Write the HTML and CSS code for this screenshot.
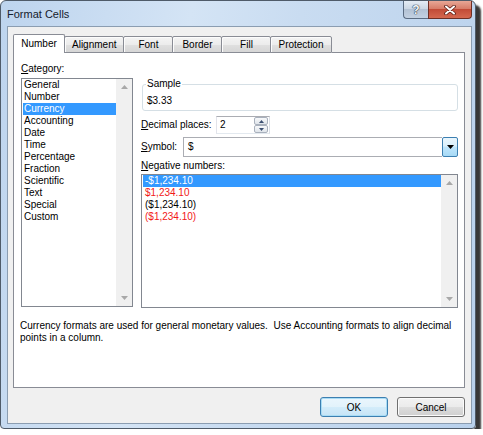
FILE: index.html
```html
<!DOCTYPE html>
<html>
<head>
<meta charset="utf-8">
<title>Format Cells</title>
<link rel="stylesheet" href="styles.css">
</head>
<body>
<div class="window">
  <div class="titlebar">
    <span class="title">Format Cells</span>
    <div class="caps">
      <div class="cap help">?</div>
      <div class="cap close">
        <svg width="12" height="10" viewBox="0 0 12 10"><path d="M2 1.5L10 8.5M10 1.5L2 8.5" stroke="#5a1c14" stroke-width="3.6" stroke-linecap="round"/><path d="M2 1.5L10 8.5M10 1.5L2 8.5" stroke="#ffffff" stroke-width="2" stroke-linecap="round"/></svg>
      </div>
    </div>
  </div>
  <div class="client">
    <div class="tabs">
      <div class="tab active">Number</div>
      <div class="tab">Alignment</div>
      <div class="tab">Font</div>
      <div class="tab">Border</div>
      <div class="tab">Fill</div>
      <div class="tab">Protection</div>
      <div class="tab-fill"></div>
    </div>
    <div class="panel">
      <div class="panel-main">
        <div class="col-left">
          <div class="lbl"><u>C</u>ategory:</div>
          <div class="listbox cat-list">
            <div class="items">
              <div class="item">General</div>
              <div class="item">Number</div>
              <div class="item sel">Currency</div>
              <div class="item">Accounting</div>
              <div class="item">Date</div>
              <div class="item">Time</div>
              <div class="item">Percentage</div>
              <div class="item">Fraction</div>
              <div class="item">Scientific</div>
              <div class="item">Text</div>
              <div class="item">Special</div>
              <div class="item">Custom</div>
            </div>
            <div class="vscroll">
              <span class="arr"><svg width="7" height="4" viewBox="0 0 7 4"><path d="M0 4L3.5 0L7 4Z" fill="#a8a8a8"/></svg></span>
              <span class="arr"><svg width="7" height="4" viewBox="0 0 7 4"><path d="M0 0L3.5 4L7 0Z" fill="#a8a8a8"/></svg></span>
            </div>
          </div>
        </div>
        <div class="col-right">
          <fieldset class="sample">
            <legend>Sample</legend>
            <div class="sample-val">$3.33</div>
          </fieldset>
          <div class="row dec">
            <span class="row-lbl dec-lbl"><u>D</u>ecimal places:</span>
            <div class="spin">
              <span class="spin-text">2</span>
              <div class="spin-btns">
                <span class="sb"><svg width="5" height="3" viewBox="0 0 5 3"><path d="M0 3L2.5 0L5 3Z" fill="#3a4e70"/></svg></span>
                <span class="sb"><svg width="5" height="3" viewBox="0 0 5 3"><path d="M0 0L2.5 3L5 0Z" fill="#3a4e70"/></svg></span>
              </div>
            </div>
          </div>
          <div class="row sym">
            <span class="row-lbl sym-lbl"><u>S</u>ymbol:</span>
            <div class="combo">
              <span class="combo-text">$</span>
              <span class="combo-btn"><svg width="7" height="4" viewBox="0 0 7 4"><path d="M0 0L3.5 4L7 0Z" fill="#000"/></svg></span>
            </div>
          </div>
          <div class="lbl neg-lbl"><u>N</u>egative numbers:</div>
          <div class="listbox neg-list">
            <div class="items">
              <div class="item sel">-$1,234.10</div>
              <div class="item red">$1,234.10</div>
              <div class="item">($1,234.10)</div>
              <div class="item red">($1,234.10)</div>
            </div>
            <div class="vscroll">
              <span class="arr"><svg width="7" height="4" viewBox="0 0 7 4"><path d="M0 4L3.5 0L7 4Z" fill="#a8a8a8"/></svg></span>
              <span class="arr"><svg width="7" height="4" viewBox="0 0 7 4"><path d="M0 0L3.5 4L7 0Z" fill="#a8a8a8"/></svg></span>
            </div>
          </div>
        </div>
      </div>
      <p class="desc">Currency formats are used for general monetary values.&nbsp; Use Accounting formats to align decimal<br>points in a column.</p>
    </div>
    <div class="buttons">
      <button class="btn default">OK</button>
      <button class="btn">Cancel</button>
    </div>
  </div>
</div>
</body>
</html>
```

FILE: styles.css
```css
html, body {
  margin: 0;
  padding: 0;
  background: #ffffff;
}

body {
  font-family: "Liberation Sans", Arial, sans-serif;
  font-size: 10px;
  color: #000;
}

.window {
  width: 476px;
  height: 429px;
  box-sizing: border-box;
  border: 1px solid #4f5b69;
  border-radius: 6px 6px 4px 4px;
  background: linear-gradient(100deg, #bdd4ee 0%, #d4e4f5 35%, #c9dcf1 55%, #b9d1ec 100%);
  box-shadow: 5px 5px 2px rgba(0, 0, 0, 0.78);
  display: flex;
  flex-direction: column;
}

.titlebar {
  height: 25px;
  flex: none;
  display: flex;
  align-items: flex-start;
  padding: 0 3px 0 6px;
}

.title {
  font-size: 11px;
  line-height: 12px;
  margin-top: 7px;
  color: #16202c;
}

.caps {
  margin-left: auto;
  display: flex;
}

.cap {
  height: 18px;
  box-sizing: border-box;
  display: flex;
  align-items: center;
  justify-content: center;
}

.help {
  width: 25px;
  border: 1px solid #5b6c82;
  border-top: none;
  border-right: none;
  border-radius: 0 0 0 4px;
  background: linear-gradient(#e4ecf5 0%, #ccd7e4 45%, #b3c2d4 50%, #c3d1e2 100%);
  color: #f4f7fb;
  font-weight: bold;
  font-size: 12px;
  text-shadow: 0 0 1px #2b3a4e, 0 0 1px #2b3a4e, 0 0 1px #2b3a4e;
}

.close {
  width: 44px;
  border: 1px solid #6e2f25;
  border-top: none;
  border-radius: 0 0 4px 0;
  background: linear-gradient(#e8a796 0%, #d77d69 45%, #c24b37 50%, #d5684f 100%);
}

.client {
  flex: 1;
  margin: 0 3px 4px 6px;
  border: 1px solid #8b9db1;
  background: #f0f0f0;
  padding: 7px 6px 6px 5px;
  display: flex;
  flex-direction: column;
}

.tabs {
  height: 19px;
  flex: none;
  display: flex;
  align-items: flex-end;
}

.tab {
  height: 17px;
  box-sizing: border-box;
  min-width: 50px;
  padding: 0 7px;
  margin-left: -1px;
  border: 1px solid #898c95;
  border-radius: 2px 2px 0 0;
  background: linear-gradient(#f4f4f4 0%, #ececec 50%, #e0e0e0 51%, #d6d6d6 100%);
  box-shadow: inset 1px 1px 0 #fcfcfc;
  line-height: 15px;
  text-align: center;
  white-space: nowrap;
}

.tab.active {
  height: 19px;
  margin-left: 0;
  border-bottom: none;
  background: #ffffff;
  box-shadow: none;
  line-height: 18px;
  min-width: 52px;
}

.tab-fill {
  flex: 1;
  align-self: stretch;
  border-bottom: 1px solid #898c95;
}

.panel {
  height: 335px;
  flex: none;
  box-sizing: border-box;
  border: 1px solid #898c95;
  border-top: none;
  background: #ffffff;
}

.panel-main {
  display: flex;
  padding: 10px 0 0 7px;
}

.col-left {
  width: 112px;
  flex: none;
}

.lbl {
  line-height: 12px;
  margin-bottom: 3px;
  white-space: nowrap;
}

.listbox {
  box-sizing: border-box;
  border: 1px solid #828790;
  background: #fff;
  display: flex;
}

.cat-list {
  height: 229px;
}

.items {
  flex: 1;
  padding-left: 1px;
}

.item {
  line-height: 12px;
  padding-left: 1px;
  white-space: nowrap;
}

.item.sel {
  background: #3399ff;
  color: #ffffff;
}

.item.red {
  color: #f21818;
}

.vscroll {
  width: 16px;
  flex: none;
  background: #f0f0f0;
  display: flex;
  flex-direction: column;
  justify-content: space-between;
}

.arr {
  height: 16px;
  display: flex;
  align-items: center;
  justify-content: center;
}

.col-right {
  width: 317px;
  flex: none;
  margin-left: 8px;
}

.sample {
  margin: 15px 0 0 1px;
  padding: 5px 3px 3px;
  border: 1px solid #d5dfe5;
  border-radius: 3px;
  min-width: 0;
}

.sample legend {
  padding: 0 1px;
  line-height: 12px;
}

.sample-val {
  line-height: 12px;
  padding-left: 1px;
}

.row {
  display: flex;
  align-items: center;
}

.row-lbl {
  line-height: 12px;
  white-space: nowrap;
}

.dec {
  margin-top: 5px;
}

.dec-lbl {
  width: 75px;
}

.spin {
  width: 54px;
  height: 18px;
  box-sizing: border-box;
  border: 1px solid #abadb3;
  border-left-color: #e2e3ea;
  border-right-color: #dbdfe6;
  border-bottom-color: #e3e9ef;
  background: #fff;
  display: flex;
  align-items: center;
}

.spin-text {
  padding-left: 3px;
  line-height: 12px;
}

.spin-btns {
  margin-left: auto;
  width: 14px;
  height: 16px;
  display: flex;
  flex-direction: column;
  margin-right: 1px;
}

.sb {
  flex: 1;
  box-sizing: border-box;
  border: 1px solid #a9b1bd;
  border-radius: 2px;
  background: linear-gradient(#f8f9fb, #dfe4ea);
  display: flex;
  align-items: center;
  justify-content: center;
}

.sym {
  margin-top: 3px;
}

.sym-lbl {
  width: 42px;
}

.combo {
  width: 275px;
  height: 20px;
  display: flex;
}

.combo-text {
  flex: 1;
  box-sizing: border-box;
  border: 1px solid #abadb3;
  border-right: none;
  padding-left: 4px;
  line-height: 18px;
  background: #fff;
}

.combo-btn {
  width: 16px;
  box-sizing: border-box;
  border: 1px solid #3c7fb1;
  border-radius: 2px;
  background: linear-gradient(#eaf6fd 0%, #d9f0fc 45%, #bee6fd 50%, #a7d9f5 100%);
  display: flex;
  align-items: center;
  justify-content: center;
}

.neg-lbl {
  margin-top: 3px;
  margin-bottom: 2px;
}

.neg-list {
  height: 134px;
}

.neg-list .item {
  padding-left: 2px;
}

.desc {
  margin: 12px 0 0 6px;
  line-height: 12px;
}

.buttons {
  display: flex;
  justify-content: flex-end;
  gap: 9px;
  margin-top: 9px;
}

.btn {
  width: 68px;
  height: 20px;
  box-sizing: border-box;
  border: 1px solid #707070;
  border-radius: 3px;
  background: linear-gradient(#f2f2f2 0%, #ebebeb 50%, #dddddd 51%, #cfcfcf 100%);
  box-shadow: inset 0 0 0 1px #fbfbfb;
  font-family: "Liberation Sans", Arial, sans-serif;
  font-size: 10px;
  color: #000;
  padding: 0;
}

.btn.default {
  border-color: #3c7fb1;
  background: linear-gradient(#eaf6fd 0%, #e2f2fb 50%, #d3ecfa 51%, #c6e4f6 100%);
  box-shadow: inset 0 0 0 1px #a8dcf5;
}
```
